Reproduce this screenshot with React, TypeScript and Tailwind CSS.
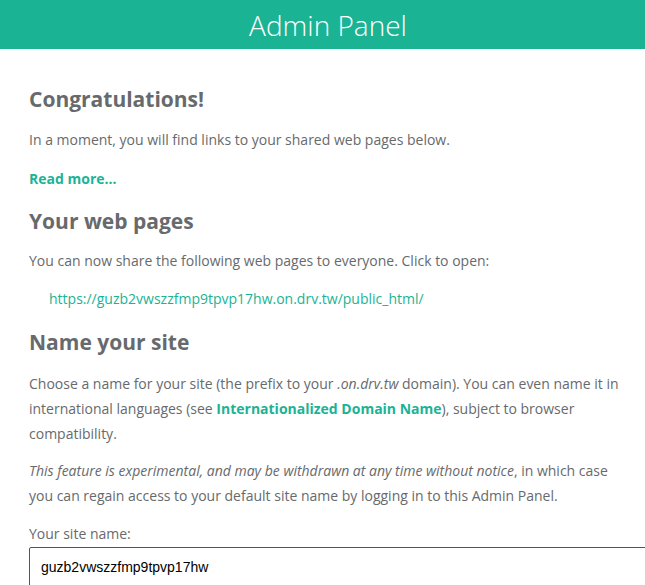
const font = { fontFamily: '"Open Sans", sans-serif' };

const App = () => {
  return (
    <div className="min-h-screen overflow-hidden bg-white text-[#676a6c]" style={font}>
      {/* Header */}
      <div className="h-[49px] bg-[#1ab394] flex items-center justify-center pl-[11px]">
        <h1 className="text-[28px] font-light text-white leading-none">Admin Panel</h1>
      </div>

      {/* Main content */}
      <div className="pl-[29px] pr-[20px] text-[14px] leading-[25px]">
        <h2 className="mt-[35px] text-[21px] font-bold leading-[30px]">Congratulations!</h2>
        <p className="mt-[13px]">In a moment, you will find links to your shared web pages below.</p>
        <p className="mt-[14px]">
          <a href="#" className="font-bold text-[#1ab394]">Read more...</a>
        </p>

        <h2 className="mt-[15px] text-[21px] font-bold leading-[30px]">Your web pages</h2>
        <p className="mt-[12px]">You can now share the following web pages to everyone. Click to open:</p>
        <ul className="mt-[13px] pl-[20px]">
          <li>
            <a href="#" className="text-[#1ab394]">https://guzb2vwszzfmp9tpvp17hw.on.drv.tw/public_html/</a>
          </li>
        </ul>

        <h2 className="mt-[16px] text-[21px] font-bold leading-[30px]">Name your site</h2>
        <p className="mt-[14px]">
          Choose a name for your site (the prefix to your <i>.on.drv.tw</i> domain). You can even name it in
          international languages (see{' '}
          <a href="#" className="font-bold text-[#1ab394]">Internationalized Domain Name</a>), subject to browser
          compatibility.
        </p>
        <p className="mt-[12px]">
          <i>This feature is experimental, and may be withdrawn at any time without notice</i>, in which case
          you can regain access to your default site name by logging in to this Admin Panel.
        </p>

        <label className="block mt-[13px]">Your site name:</label>
        <input
          readOnly
          value="guzb2vwszzfmp9tpvp17hw"
          className="mt-[1px] block w-[700px] h-[40px] border border-[#555] rounded-[2px] px-[11px] text-[14px] text-black outline-none"
          style={{ fontFamily: '"Liberation Sans", Arial, sans-serif' }}
        />
      </div>
    </div>
  );
};

export default App;
